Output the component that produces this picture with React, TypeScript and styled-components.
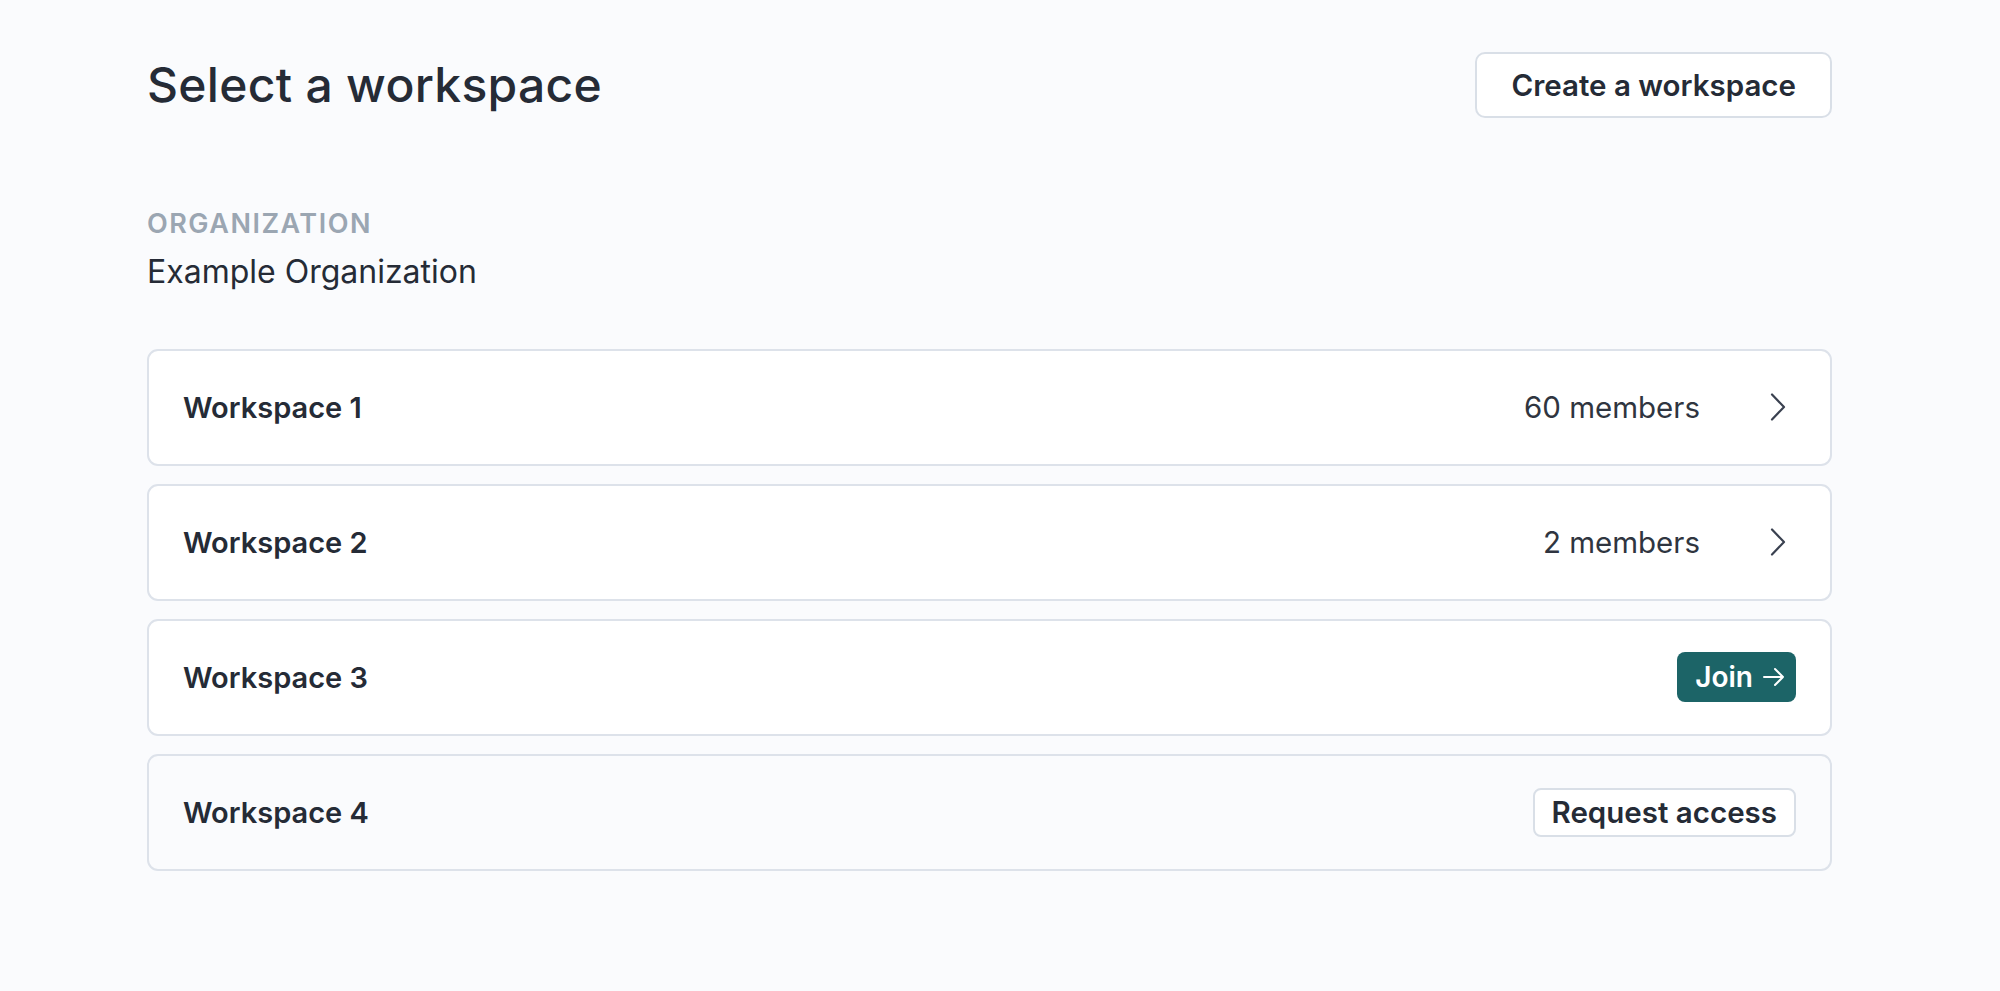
import styled, { createGlobalStyle } from 'styled-components'

const GlobalStyle = createGlobalStyle`
  html, body {
    margin: 0;
    padding: 0;
    background-color: #fafbfd;
  }
  body {
    font-family: Inter, "Noto Sans", sans-serif;
    color: #252b36;
  }
`

const Page = styled.div`
  width: 1685px;
  padding: 52px 0 80px 147px;
`

const Header = styled.div`
  display: flex;
  align-items: center;
  justify-content: space-between;
  height: 66px;
`

const Title = styled.h1`
  margin: 0;
  font-size: 48px;
  font-weight: 500;
  letter-spacing: 0.3px;
  line-height: 1.2;
`

const OutlineButton = styled.button<{ $small?: boolean }>`
  font-family: Inter, sans-serif;
  font-weight: 600;
  color: #252b36;
  background: #ffffff;
  border: 2px solid #d9dfe7;
  border-radius: ${(p) => (p.$small ? '8px' : '10px')};
  height: ${(p) => (p.$small ? '49px' : '66px')};
  padding: ${(p) => (p.$small ? '0 17px' : '0 34px')};
  font-size: ${(p) => (p.$small ? '29.5px' : '29.5px')};
  cursor: pointer;
`

const Org = styled.div`
  margin-top: 90px;
  display: flex;
  flex-direction: column;
  gap: 13px;
`

const OrgLabel = styled.div`
  font-size: 27px;
  font-weight: 600;
  letter-spacing: 1.5px;
  color: #9ba6b2;
  line-height: 1.2;
`

const OrgName = styled.div`
  font-size: 32px;
  line-height: 1.2;
`

const List = styled.div`
  margin-top: 57px;
  display: flex;
  flex-direction: column;
  gap: 18px;
`

const Card = styled.div<{ $muted?: boolean }>`
  box-sizing: border-box;
  height: 117px;
  display: flex;
  align-items: center;
  justify-content: space-between;
  padding: 0 34px;
  border: 2px solid #dde2ea;
  border-radius: 11px;
  background: ${(p) => (p.$muted ? '#fafbfd' : '#ffffff')};
`

const Name = styled.div`
  font-size: 29px;
  font-weight: 600;
`

const Meta = styled.div`
  display: flex;
  align-items: center;
  gap: 70px;
  font-size: 29.5px;
  color: #2f3540;
`

const Chevron = styled.svg`
  width: 16px;
  height: 28px;
  margin-right: 10px;
`

const JoinButton = styled.button`
  display: flex;
  align-items: center;
  gap: 9px;
  height: 50px;
  padding: 0 10px 0 18px;
  border: none;
  border-radius: 8px;
  background: #1c6467;
  color: #ffffff;
  font-family: Inter, sans-serif;
  font-size: 28px;
  font-weight: 600;
  cursor: pointer;
`

const Arrow = styled.svg`
  width: 24px;
  height: 24px;
`

const workspaces = [
  { name: 'Workspace 1', members: 60 },
  { name: 'Workspace 2', members: 2 }
]

export default function App() {
  return (
    <>
      <GlobalStyle />
      <Page>
        <Header>
          <Title>Select a workspace</Title>
          <OutlineButton>Create a workspace</OutlineButton>
        </Header>
        <Org>
          <OrgLabel>ORGANIZATION</OrgLabel>
          <OrgName>Example Organization</OrgName>
        </Org>
        <List>
          {workspaces.map((w) => (
            <Card key={w.name}>
              <Name>{w.name}</Name>
              <Meta>
                <span>{w.members} members</span>
                <Chevron viewBox="0 0 16 28" fill="none">
                  <path d="M2 1.5 L14 14 L2 26.5" stroke="#3a4150" strokeWidth="2.2" strokeLinecap="round" strokeLinejoin="round" />
                </Chevron>
              </Meta>
            </Card>
          ))}
          <Card>
            <Name>Workspace 3</Name>
            <JoinButton>
              Join
              <Arrow viewBox="0 0 24 24" fill="none">
                <path d="M2 12 H21 M13 4 L21 12 L13 20" stroke="#ffffff" strokeWidth="2" strokeLinecap="round" strokeLinejoin="round" />
              </Arrow>
            </JoinButton>
          </Card>
          <Card $muted>
            <Name>Workspace 4</Name>
            <OutlineButton $small>Request access</OutlineButton>
          </Card>
        </List>
      </Page>
    </>
  )
}
